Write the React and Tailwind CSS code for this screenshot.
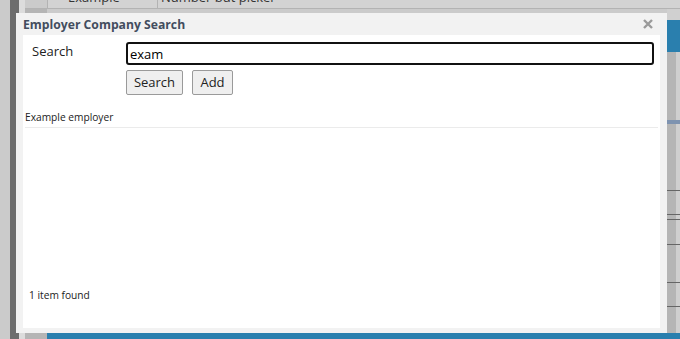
import React from 'react'

export default function App() {
  return (
    <div className="relative w-[680px] h-[339px] overflow-hidden bg-[#cbcbcb] font-['Open_Sans',sans-serif]">
      {/* page behind the dialog */}
      <div className="flex h-full">
        <div className="w-[10px] bg-[#cbcbcb]" />
        <div className="w-[9px] bg-[#6d6d6d]" />
        <div className="w-[6px] bg-[#dcdcdc]" />
        <div className="flex-1 flex flex-col">
          <div className="h-[9px] flex border-b border-[#b3b3b3] overflow-hidden text-[13px] text-[#333] leading-[13px]">
            <div className="w-[22px]" />
            <div className="w-[110px] border-l border-[#b3b3b3] bg-[#d3d3d3] flex pl-[20px] mt-[-9px]">Example</div>
            <div className="flex-1 border-l border-[#b3b3b3] bg-[#d3d3d3] pl-[3px] mt-[-9px]">Number but picker</div>
          </div>
          <div className="flex-1 flex">
            <div className="w-[22px] bg-[#b5b5b5]" />
            <div className="flex-1" />
            <div className="w-[13px] flex flex-col">
              <div className="h-[11px] bg-[#d0d0d0]" />
              <div className="h-[32px] bg-[#2a7fae]" />
              <div className="flex-1 flex">
                <div className="w-[9px] flex flex-col bg-[#b5b5b5]">
                  <div className="h-[68px]" />
                  <div className="h-[4px] bg-[#7e93b0]" />
                  <div className="h-[67px] border-b border-[#666]" />
                  <div className="h-[24px] border-b border-[#666]" />
                  <div className="h-[5px] border-b border-[#666]" />
                  <div className="h-[25px] border-b border-[#666]" />
                  <div className="h-[38px] border-b border-[#666]" />
                  <div className="h-[24px] border-b border-[#666]" />
                </div>
                <div className="flex-1 flex flex-col bg-[#cfcfcf]">
                  <div className="h-[68px]" />
                  <div className="h-[4px] bg-[#7e93b0]" />
                  <div className="h-[67px] border-b border-[#666]" />
                  <div className="h-[24px] border-b border-[#666]" />
                  <div className="h-[5px] border-b border-[#666]" />
                  <div className="h-[25px] border-b border-[#666]" />
                  <div className="h-[38px] border-b border-[#666]" />
                  <div className="h-[24px] border-b border-[#666]" />
                </div>
              </div>
            </div>
          </div>
          <div className="h-[6px] flex">
            <div className="w-[22px] bg-[#b5b5b5]" />
            <div className="flex-1 bg-[#2a7fae]" />
          </div>
        </div>
      </div>

      {/* dialog */}
      <div className="absolute left-[16px] top-[13px] w-[651px] h-[320px] bg-[#f2f2f2] flex flex-col">
        <div className="h-[22px] flex items-center pl-[7px] pr-[14px]">
          <span className="flex-1 pt-[3px] text-[12.2px] font-bold text-[#434d5e]">Employer Company Search</span>
          <svg width="10" height="10" viewBox="0 0 10 10">
            <path d="M1 1L9 9M9 1L1 9" stroke="#9a9a9a" strokeWidth="2.4" />
          </svg>
        </div>
        <div className="flex-1 mx-[7px] mb-[5px] bg-white flex flex-col text-[#222]">
          <div className="flex pt-[7px]">
            <div className="w-[103px] pl-[9px] text-[13px]">Search</div>
            <div className="flex-1 flex flex-col pr-[6px]">
              <input
                readOnly
                value="exam"
                className="h-[23px] border-2 border-[#111] rounded-[3px] px-[2px] text-[13px] text-black outline-none"
              />
              <div className="flex gap-[9px] mt-[5px]">
                <button className="w-[57px] h-[25px] border border-[#9a9a9a] rounded-[2px] bg-[#efefef] text-[13px] text-[#222]">Search</button>
                <button className="w-[41px] h-[25px] border border-[#9a9a9a] rounded-[2px] bg-[#efefef] text-[13px] text-[#222]">Add</button>
              </div>
            </div>
          </div>
          <div className="mt-[15px] mx-[2px] pb-[3px] border-b border-[#ebebeb] text-[10.2px] leading-[14px]">Example employer</div>
          <div className="flex-1" />
          <div className="pl-[6px] pb-[26px] text-[10.2px] leading-[14px]">1 item found</div>
        </div>
      </div>
    </div>
  )
}
